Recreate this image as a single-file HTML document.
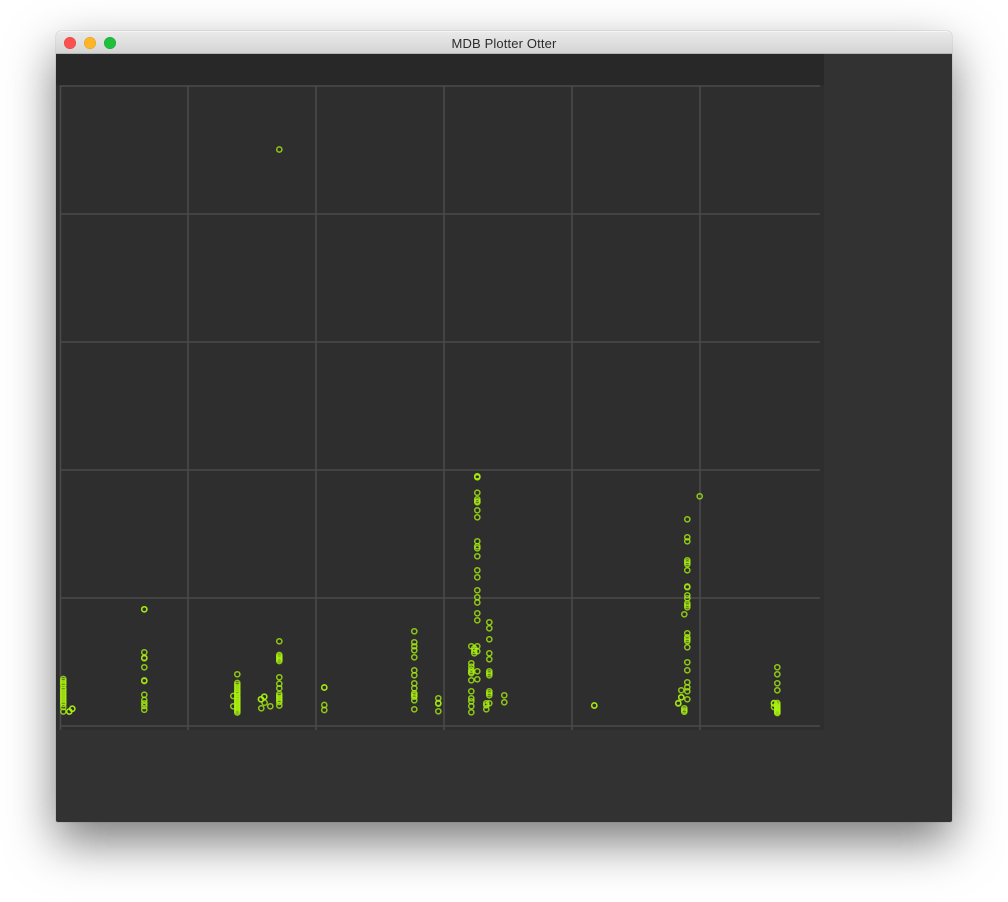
<!DOCTYPE html>
<html><head><meta charset="utf-8"><title>MDB Plotter Otter</title>
<style>
html,body{margin:0;padding:0;width:1008px;height:902px;background:#fff;overflow:hidden}
#win{position:absolute;left:56px;top:31px;width:896px;height:791px;border-radius:5px 5px 2px 2px;background:#323232;box-shadow:0 20px 48px rgba(0,0,0,.52),0 0 1px rgba(0,0,0,.4)}
#bar{position:absolute;left:0;top:0;width:896px;height:23px;border-radius:5px 5px 0 0;background:linear-gradient(#ebebeb,#d3d3d3);box-shadow:inset 0 1px 0 #f6f6f6;border-bottom:0;}
#bar:after{content:"";position:absolute;left:0;right:0;bottom:0;height:1px;background:#b6b6b6}
#t{position:absolute;left:0;width:896px;top:5px;text-align:center;font:13px/16px "Liberation Sans",sans-serif;color:#2c2c2c;letter-spacing:.14px}
svg{position:absolute;left:0;top:0}
.p circle{r:2.6px}
</style></head><body>
<div id="win"><div id="bar"><div id="t">MDB Plotter Otter</div></div></div>
<svg width="1008" height="902" viewBox="0 0 1008 902">
<circle cx="70" cy="43" r="5.7" fill="#fc4f4f" stroke="#e2463f" stroke-width=".6"/>
<circle cx="90" cy="43" r="5.7" fill="#ffb626" stroke="#e29e20" stroke-width=".6"/>
<circle cx="110" cy="43" r="5.7" fill="#1dbf3b" stroke="#1aa632" stroke-width=".6"/>
<rect x="56" y="54" width="768" height="676" fill="#2e2e2e"/>
<rect x="56" y="54" width="768" height="31" fill="#282828"/>
<g stroke="#4a4a4a" stroke-width="1.6" fill="none">
<path d="M60.5 86V730M188 86V730M316 86V730M444 86V730M572 86V730M700 86V730"/>
<path d="M60 86H820M60 214H820M60 342H820M60 470H820M60 598H820M60 726H820"/>
</g>
<g class="p" fill="none" stroke="#aaf210" stroke-width="1.5" stroke-opacity=".78">
<circle cx="63.3" cy="679"/><circle cx="63.3" cy="681"/><circle cx="63.3" cy="683"/><circle cx="63.3" cy="685"/><circle cx="63.3" cy="688"/><circle cx="63.3" cy="690"/><circle cx="63.3" cy="692"/><circle cx="63.3" cy="694"/><circle cx="63.3" cy="696"/><circle cx="63.3" cy="698"/><circle cx="63.3" cy="700"/><circle cx="63.3" cy="702"/><circle cx="63.3" cy="704"/><circle cx="63.3" cy="707"/><circle cx="63.3" cy="711.5"/>
<circle cx="69.3" cy="711.5"/><circle cx="69.3" cy="711.5"/><circle cx="72.3" cy="708.7"/><circle cx="72.3" cy="708.7"/>
<circle cx="144.3" cy="609.3"/><circle cx="144.3" cy="609.3"/><circle cx="144.3" cy="652.3"/><circle cx="144.3" cy="657.7"/><circle cx="144.3" cy="658.3"/><circle cx="144.3" cy="667.3"/><circle cx="144.3" cy="680.4"/><circle cx="144.3" cy="681"/><circle cx="144.3" cy="694.7"/><circle cx="144.3" cy="700"/><circle cx="144.3" cy="703.3"/><circle cx="144.3" cy="706"/><circle cx="144.3" cy="709.7"/>
<circle cx="237.3" cy="674.3"/><circle cx="237.3" cy="683"/><circle cx="237.3" cy="685"/><circle cx="237.3" cy="687"/><circle cx="237.3" cy="689"/><circle cx="237.3" cy="691"/><circle cx="237.3" cy="692.5"/><circle cx="237.3" cy="694"/><circle cx="237.3" cy="696"/><circle cx="237.3" cy="697.5"/><circle cx="237.3" cy="699"/><circle cx="237.3" cy="700.5"/><circle cx="237.3" cy="702"/><circle cx="237.3" cy="703.5"/><circle cx="237.3" cy="705"/><circle cx="237.3" cy="706.5"/><circle cx="237.3" cy="708"/><circle cx="237.3" cy="709.5"/><circle cx="237.3" cy="711"/><circle cx="237.3" cy="712.5"/>
<circle cx="233.3" cy="696"/><circle cx="233.3" cy="706.3"/>
<circle cx="261.3" cy="708.3"/><circle cx="261" cy="699.3"/><circle cx="261" cy="699.3"/><circle cx="264.3" cy="696.7"/><circle cx="264.3" cy="696.7"/><circle cx="264.6" cy="702.7"/><circle cx="270.3" cy="706.3"/>
<circle cx="279.3" cy="149.5"/><circle cx="279.3" cy="641.3"/><circle cx="279.3" cy="655"/><circle cx="279.3" cy="656.5"/><circle cx="279.3" cy="658"/><circle cx="279.3" cy="659.5"/><circle cx="279.3" cy="661"/><circle cx="279.3" cy="677.3"/><circle cx="279.3" cy="683.7"/><circle cx="279.3" cy="688.3"/><circle cx="279.3" cy="694"/><circle cx="279.3" cy="696"/><circle cx="279.3" cy="698"/><circle cx="279.3" cy="700"/><circle cx="279.3" cy="702"/><circle cx="279.3" cy="705.5"/>
<circle cx="324.3" cy="687.5"/><circle cx="324.3" cy="687.5"/><circle cx="324.3" cy="705"/><circle cx="324.3" cy="710"/>
<circle cx="414.3" cy="631.3"/><circle cx="414.3" cy="642.3"/><circle cx="414.3" cy="646.3"/><circle cx="414.3" cy="650.3"/><circle cx="414.3" cy="657.3"/><circle cx="414.3" cy="670.3"/><circle cx="414.3" cy="675.3"/><circle cx="414.3" cy="683.3"/><circle cx="414.3" cy="688.3"/><circle cx="414.3" cy="693.3"/><circle cx="414.3" cy="695"/><circle cx="414.3" cy="696.7"/><circle cx="414.3" cy="700.3"/><circle cx="414.3" cy="709.3"/>
<circle cx="438.3" cy="698.3"/><circle cx="438.3" cy="703"/><circle cx="438.3" cy="703.6"/><circle cx="438.3" cy="711.3"/>
<circle cx="471.3" cy="646.3"/><circle cx="471.3" cy="663.3"/><circle cx="471.3" cy="666.7"/><circle cx="471.3" cy="670"/><circle cx="471.3" cy="672"/><circle cx="471.3" cy="673.3"/><circle cx="471.3" cy="680.3"/><circle cx="471.3" cy="691.3"/><circle cx="471.3" cy="698.3"/><circle cx="471.3" cy="701.3"/><circle cx="471.3" cy="706.3"/><circle cx="471.3" cy="712.3"/>
<circle cx="474.3" cy="648.3"/><circle cx="474.3" cy="651"/><circle cx="474.3" cy="653.3"/>
<circle cx="477.3" cy="476.2"/><circle cx="477.3" cy="476.8"/><circle cx="477.3" cy="477.3"/><circle cx="477.3" cy="492.7"/><circle cx="477.3" cy="499.3"/><circle cx="477.3" cy="501.3"/><circle cx="477.3" cy="502.3"/><circle cx="477.3" cy="510.3"/><circle cx="477.3" cy="517.3"/><circle cx="477.3" cy="541.3"/><circle cx="477.3" cy="546.3"/><circle cx="477.3" cy="548.3"/><circle cx="477.3" cy="556.3"/><circle cx="477.3" cy="570.3"/><circle cx="477.3" cy="577.3"/><circle cx="477.3" cy="590.3"/><circle cx="477.3" cy="597.3"/><circle cx="477.3" cy="602.5"/><circle cx="477.3" cy="613.3"/><circle cx="477.3" cy="620.3"/><circle cx="477.3" cy="646.3"/><circle cx="477.3" cy="651.3"/><circle cx="477.3" cy="671.3"/><circle cx="477.3" cy="679.3"/>
<circle cx="489.3" cy="622.3"/><circle cx="489.3" cy="628.3"/><circle cx="489.3" cy="639.3"/><circle cx="489.3" cy="653.3"/><circle cx="489.3" cy="659.3"/><circle cx="489.3" cy="671.3"/><circle cx="489.3" cy="673.3"/><circle cx="489.3" cy="675.3"/><circle cx="489.3" cy="691.3"/><circle cx="489.3" cy="693.3"/><circle cx="489.3" cy="695.3"/><circle cx="489.3" cy="703.3"/>
<circle cx="486.3" cy="703.3"/><circle cx="486.3" cy="705.3"/><circle cx="486.3" cy="709.3"/>
<circle cx="504.3" cy="695.3"/><circle cx="504.3" cy="702.3"/>
<circle cx="594.3" cy="705.5"/><circle cx="594.3" cy="705.5"/>
<circle cx="699.7" cy="496.3"/>
<circle cx="687.3" cy="519.3"/><circle cx="687.3" cy="537.3"/><circle cx="687.3" cy="541.3"/><circle cx="687.3" cy="560.3"/><circle cx="687.3" cy="562.3"/><circle cx="687.3" cy="564.3"/><circle cx="687.3" cy="570.3"/><circle cx="687.3" cy="586.5"/><circle cx="687.3" cy="587.2"/><circle cx="687.3" cy="595.3"/><circle cx="687.3" cy="598.3"/><circle cx="687.3" cy="603.3"/><circle cx="687.3" cy="605.3"/><circle cx="687.3" cy="607.3"/><circle cx="684.3" cy="614.3"/><circle cx="687.3" cy="633.3"/><circle cx="687.3" cy="637.3"/><circle cx="687.3" cy="639.3"/><circle cx="687.3" cy="641.3"/><circle cx="687.3" cy="647.3"/><circle cx="687.3" cy="662.3"/><circle cx="687.3" cy="670.3"/><circle cx="687.3" cy="682.3"/><circle cx="687.3" cy="687.3"/><circle cx="687.3" cy="691.3"/><circle cx="687.3" cy="699.3"/>
<circle cx="681.3" cy="690.3"/><circle cx="681.3" cy="697.3"/><circle cx="681.3" cy="697.3"/><circle cx="678.3" cy="703"/><circle cx="678.3" cy="703.5"/><circle cx="684.3" cy="708.3"/><circle cx="684.3" cy="710.3"/><circle cx="684.3" cy="711.7"/>
<circle cx="777.3" cy="667.3"/><circle cx="777.3" cy="674.3"/><circle cx="777.3" cy="683.3"/><circle cx="777.3" cy="690.3"/>
<circle cx="774" cy="703"/><circle cx="774" cy="703.5"/><circle cx="774" cy="707"/><circle cx="777.3" cy="703"/><circle cx="777.3" cy="704.5"/><circle cx="777.3" cy="706"/><circle cx="777.3" cy="707"/><circle cx="777.3" cy="708"/><circle cx="777.3" cy="709"/><circle cx="777.3" cy="710"/><circle cx="777.3" cy="711"/><circle cx="777.3" cy="712"/><circle cx="777.3" cy="713"/>
</g>
</svg>
</body></html>
